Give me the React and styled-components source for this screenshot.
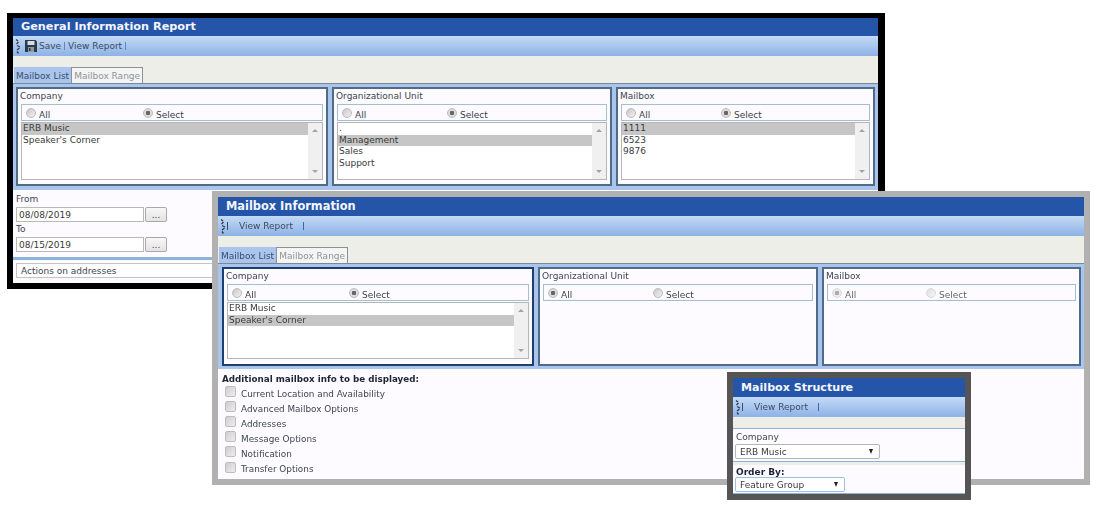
import React from 'react';
import styled, { createGlobalStyle } from 'styled-components';

const GlobalStyle = createGlobalStyle`
  html, body {
    margin: 0;
    padding: 0;
    background: #fff;
  }
  body {
    font-family: 'DejaVu Sans', Verdana, sans-serif;
    font-size: 9px;
    color: #333;
  }
`;

const Desktop = styled.div`
  position: relative;
  width: 1096px;
  height: 514px;
  overflow: hidden;
  filter: blur(0.4px);
`;

const Window = styled.div`
  position: absolute;
  left: ${(p) => p.$x}px;
  top: ${(p) => p.$y}px;
  width: ${(p) => p.$w}px;
  height: ${(p) => p.$h}px;
  box-sizing: border-box;
  border-style: solid;
  border-width: ${(p) => p.$bw};
  border-color: ${(p) => p.$frame};
  background: #fdfbff;
  display: flex;
  flex-direction: column;
  overflow: hidden;
`;

const TitleBar = styled.div`
  height: ${(p) => p.$h || 19}px;
  flex: none;
  background: #2455a8;
  color: #f4f6fb;
  font-size: ${(p) => p.$size}px;
  font-weight: bold;
  line-height: ${(p) => p.$h || 19}px;
  padding-left: 8px;
`;

const Toolbar = styled.div`
  height: 20px;
  flex: none;
  background: linear-gradient(#c4daf6, #8db2e6);
  display: flex;
  align-items: center;
  padding-left: 2px;
  color: #3c4a60;
`;

const ToolText = styled.span`
  margin-left: ${(p) => p.$gap || 0}px;
`;

const ToolSep = styled.span`
  width: 1px;
  height: 8px;
  margin-left: ${(p) => p.$gap || 3}px;
  margin-right: ${(p) => p.$after ?? 3}px;
  background: ${(p) => p.$color || '#5f84bd'};
`;

const Strip = styled.div`
  height: 11px;
  flex: none;
  background: #eeeee9;
`;

const TabRow = styled.div`
  height: 16px;
  flex: none;
  display: flex;
  background: #eeeee9;
  padding-left: 1px;
`;

const Tab = styled.div`
  box-sizing: border-box;
  height: 16px;
  padding: 0 2px;
  white-space: nowrap;
  background: ${(p) => (p.$active ? '#a9c5ee' : '#f4f4f2')};
  color: ${(p) => (p.$active ? '#3b4c6b' : '#8d949c')};
  border: ${(p) => (p.$active ? 'none' : '1px solid #8a9199')};
  border-bottom: none;
  line-height: ${(p) => (p.$active ? 18 : 16)}px;
`;

const PanelArea = styled.div`
  flex: none;
  height: ${(p) => p.$h}px;
  box-sizing: border-box;
  padding: ${(p) => p.$pad};
  background: #a9c5ee;
  border-top: 1px solid #7b8792;
  display: grid;
  grid-template-columns: ${(p) => p.$cols};
  gap: 4px;
`;

const Panel = styled.div`
  box-sizing: border-box;
  border: 2px solid ${(p) => p.$frame || '#4f6b85'};
  background: #fdfbff;
  padding: 0 3px;
  display: flex;
  flex-direction: column;
  min-width: 0;
`;

const PanelLabel = styled.div`
  height: 15px;
  line-height: 14px;
  margin-left: -1px;
  flex: none;
  color: #3e4650;
`;

const RadioBox = styled.div`
  box-sizing: border-box;
  height: 17px;
  flex: none;
  border: 1px solid #a4c0d0;
  display: grid;
  grid-template-columns: ${(p) => p.$split}px 1fr;
  align-items: center;
  padding-left: 4px;
`;

const RadioItem = styled.label`
  display: flex;
  align-items: center;
  color: ${(p) => (p.$muted ? '#666' : '#3a3f46')};
`;

const RadioDot = styled.span`
  width: 10px;
  height: 10px;
  flex: none;
  box-sizing: border-box;
  border-radius: 50%;
  border: 1px solid #bbb;
  margin-right: 3px;
  background: ${(p) =>
    p.$on
      ? 'radial-gradient(circle, #666 0 2px, #ddd 2.5px)'
      : 'linear-gradient(135deg, #c8c8c8, #f1f1f1)'};
  opacity: ${(p) => (p.$faded ? 0.55 : 1)};
`;

const RadioText = styled.span`
  position: relative;
  top: 2px;
`;

const ListBox = styled.div`
  margin-top: 1px;
  height: ${(p) => p.$h}px;
  flex: none;
  box-sizing: border-box;
  border: 1px solid #b5b5b5;
  display: flex;
  background: #fff;
`;

const ListItems = styled.div`
  flex: 1;
  min-width: 0;
`;

const ListItem = styled.div`
  height: 11.7px;
  line-height: 11.7px;
  padding-left: 1px;
  background: ${(p) => (p.$selected ? '#c6c6c6' : 'transparent')};
  color: #3a3a3a;
`;

const ScrollBar = styled.div`
  width: 14px;
  flex: none;
  background: #f0f0f0;
  display: flex;
  flex-direction: column;
  justify-content: space-between;
  align-items: center;
  padding: 6px 0;
  box-sizing: border-box;
`;

const Arrow = styled.span`
  width: 0;
  height: 0;
  border-left: 3px solid transparent;
  border-right: 3px solid transparent;
  ${(p) => (p.$down ? 'border-top' : 'border-bottom')}: 3px solid #a3a3a3;
`;

const DateSection = styled.div`
  padding: 2px 3px 0;
`;

const FieldLabel = styled.div`
  height: 14px;
  line-height: 14px;
  color: #3e4650;
`;

const DateRow = styled.div`
  display: flex;
  height: 15px;
  margin-top: 1px;
`;

const DateInput = styled.input`
  box-sizing: border-box;
  width: 128px;
  height: 15px;
  margin: 0;
  padding: 0 2px;
  border: 1px solid #b9b9b9;
  background: #fff;
  font: inherit;
  color: #3a3a3a;
  outline: none;
`;

const DateButton = styled.button`
  box-sizing: border-box;
  width: 22px;
  height: 15px;
  margin: 0 0 0 1px;
  padding: 0;
  border: 1px solid #a8a8a8;
  border-radius: 2px;
  background: linear-gradient(#f7f7f7, #e4e4e4);
  font: inherit;
  line-height: 14px;
  color: #444;
`;

const Rule = styled.div`
  height: ${(p) => p.$h || 3}px;
  margin-top: ${(p) => p.$top || 0}px;
  background: ${(p) => p.$color || '#8fb2da'};
`;

const ActionsBar = styled.div`
  box-sizing: border-box;
  height: 15px;
  margin: 3px 0 0 3px;
  border: 1px solid #c4c4c4;
  padding-left: 4px;
  line-height: 14px;
  color: #3e4650;
  background: #fff;
`;

const Options = styled.div`
  padding: 3px 4px 0;
`;

const OptionsTitle = styled.div`
  font-weight: bold;
  font-size: 8.75px;
  height: 14px;
  line-height: 14px;
  color: #1d2433;
`;

const CheckRow = styled.label`
  display: flex;
  align-items: center;
  height: 15.1px;
  padding-left: 3px;
  font-size: 8.85px;
  color: #3e4650;
`;

const CheckBox = styled.span`
  width: 11px;
  height: 11px;
  flex: none;
  box-sizing: border-box;
  border: 1px solid #bdbdbd;
  border-radius: 2px;
  background: linear-gradient(135deg, #cfcfcf, #ededed);
  margin-right: 5px;
  position: relative;
  top: -2px;
`;

const FakeSelect = styled.div`
  box-sizing: border-box;
  width: ${(p) => p.$w}px;
  height: 15px;
  margin-left: 2px;
  padding: 0 4px;
  border: 1px solid ${(p) => p.$frame || '#b5b5b5'};
  border-radius: 2px;
  background: #fff;
  display: flex;
  justify-content: space-between;
  align-items: center;
  color: #3a3a3a;
`;

const SelectArrow = styled.span`
  width: 0;
  height: 0;
  margin-right: 2px;
  border-left: 2.5px solid transparent;
  border-right: 2.5px solid transparent;
  border-top: 5px solid #222;
`;

const SmallSection = styled.div`
  padding-top: ${(p) => p.$top}px;
`;

const SmallLabel = styled.div`
  height: ${(p) => p.$h}px;
  line-height: ${(p) => p.$h}px;
  padding-left: 3px;
  font-weight: ${(p) => (p.$bold ? 'bold' : 'normal')};
  color: ${(p) => (p.$bold ? '#1d2433' : '#3e4650')};
`;

const Gripper = () => (
  <svg width="6" height="15" viewBox="0 0 6 15" fill="none" stroke="#2f3b4e" strokeWidth="1.3">
    <path d="M1 .5 3 2M3.5 3 1.5 5M2 6.5 5 8M4.5 9 2 11M2 12.5l1.5 2" />
  </svg>
);

const SaveIcon = () => (
  <svg width="12" height="12" viewBox="0 0 12 12" style={{ marginLeft: 4 }}>
    <path d="M0 0h10.5L12 1.5V12H0z" fill="#2c3a4a" />
    <rect x="2.5" y="1" width="7" height="4" fill="#d7dde6" />
    <rect x="3" y="7" width="6" height="5" fill="#8e98a6" />
    <rect x="4" y="8" width="1.5" height="3" fill="#2c3a4a" />
  </svg>
);

const Radios = ({ value, faded, split }) => (
  <RadioBox $split={split}>
    <RadioItem $muted={faded}>
      <RadioDot $on={value === 'all'} $faded={faded} />
      <RadioText>All</RadioText>
    </RadioItem>
    <RadioItem $muted={faded}>
      <RadioDot $on={value === 'select'} $faded={faded} />
      <RadioText>Select</RadioText>
    </RadioItem>
  </RadioBox>
);

const List = ({ items, selected, height }) => (
  <ListBox $h={height}>
    <ListItems>
      {items.map((item) => (
        <ListItem key={item} $selected={item === selected}>{item}</ListItem>
      ))}
    </ListItems>
    <ScrollBar>
      <Arrow />
      <Arrow $down />
    </ScrollBar>
  </ListBox>
);

const SelectionPanel = ({ label, value, faded, split, items, selected, frame, listHeight = 58 }) => (
  <Panel $frame={frame}>
    <PanelLabel>{label}</PanelLabel>
    <Radios value={value} faded={faded} split={split} />
    {items && <List items={items} selected={selected} height={listHeight} />}
  </Panel>
);

const Tabs = () => (
  <TabRow>
    <Tab $active>Mailbox List</Tab>
    <Tab>Mailbox Range</Tab>
  </TabRow>
);

const PlainToolbar = () => (
  <Toolbar>
    <Gripper />
    <ToolSep $gap={1} $after={0} $color="#3c4a60" />
    <ToolText $gap={11}>View Report</ToolText>
    <ToolSep $gap={10} $color="#3a66b0" />
  </Toolbar>
);

const checks = [
  'Current Location and Availability',
  'Advanced Mailbox Options',
  'Addresses',
  'Message Options',
  'Notification',
  'Transfer Options',
];

export default function App() {
  return (
    <Desktop>
      <GlobalStyle />

      <Window $x={7} $y={13} $w={878} $h={276} $bw="5px 7px 6px 6px" $frame="#000">
        <TitleBar $h={18} $size={11.25}>General Information Report</TitleBar>
        <Toolbar>
          <Gripper />
          <SaveIcon />
          <ToolText $gap={2}>Save</ToolText>
          <ToolSep />
          <ToolText>View Report</ToolText>
          <ToolSep />
        </Toolbar>
        <Strip />
        <Tabs />
        <PanelArea $h={107} $pad="3px 3px 4px" $cols="312px 280px 1fr">
          <SelectionPanel label="Company" value="select" split={117}
            items={['ERB Music', "Speaker's Corner"]} selected="ERB Music" />
          <SelectionPanel label="Organizational Unit" value="select" split={105}
            items={['.', 'Management', 'Sales', 'Support']} selected="Management" />
          <SelectionPanel label="Mailbox" value="select" split={95}
            items={['1111', '6523', '9876']} selected="1111" />
        </PanelArea>
        <DateSection>
          <FieldLabel>From</FieldLabel>
          <DateRow>
            <DateInput readOnly value="08/08/2019" />
            <DateButton>...</DateButton>
          </DateRow>
          <FieldLabel>To</FieldLabel>
          <DateRow>
            <DateInput readOnly value="08/15/2019" />
            <DateButton>...</DateButton>
          </DateRow>
        </DateSection>
        <Rule $top={5} />
        <ActionsBar>Actions on addresses</ActionsBar>
      </Window>

      <Window $x={212} $y={191} $w={878} $h={294} $bw="6px" $frame="#b1b1b1">
        <TitleBar $size={11.4}>Mailbox Information</TitleBar>
        <PlainToolbar />
        <Strip />
        <Tabs />
        <PanelArea $h={106} $pad="3px 3px 3px 4px" $cols="312px 280px 1fr">
          <SelectionPanel label="Company" value="select" split={117} frame="#1f3f6b" listHeight={57}
            items={['ERB Music', "Speaker's Corner"]} selected="Speaker's Corner" />
          <SelectionPanel label="Organizational Unit" value="all" split={105} />
          <SelectionPanel label="Mailbox" value="all" faded split={94} />
        </PanelArea>
        <Options>
          <OptionsTitle>Additional mailbox info to be displayed:</OptionsTitle>
          {checks.map((label) => (
            <CheckRow key={label}>
              <CheckBox />
              {label}
            </CheckRow>
          ))}
        </Options>
      </Window>

      <Window $x={727} $y={372} $w={244} $h={128} $bw="6px" $frame="#555">
        <TitleBar $size={11.1}>Mailbox Structure</TitleBar>
        <PlainToolbar />
        <Strip />
        <Rule $h={1} />
        <SmallSection $top={1}>
          <SmallLabel $h={14}>Company</SmallLabel>
          <FakeSelect $w={145}>
            ERB Music
            <SelectArrow />
          </FakeSelect>
        </SmallSection>
        <Rule $h={1} $top={2} />
        <Rule $h={3} $color="#eeeee9" />
        <SmallSection $top={2}>
          <SmallLabel $bold $h={10}>Order By:</SmallLabel>
          <FakeSelect $w={110} $frame="#9dbfe6">
            Feature Group
            <SelectArrow />
          </FakeSelect>
        </SmallSection>
        <Rule $h={1} $top={1} />
      </Window>
    </Desktop>
  );
}
